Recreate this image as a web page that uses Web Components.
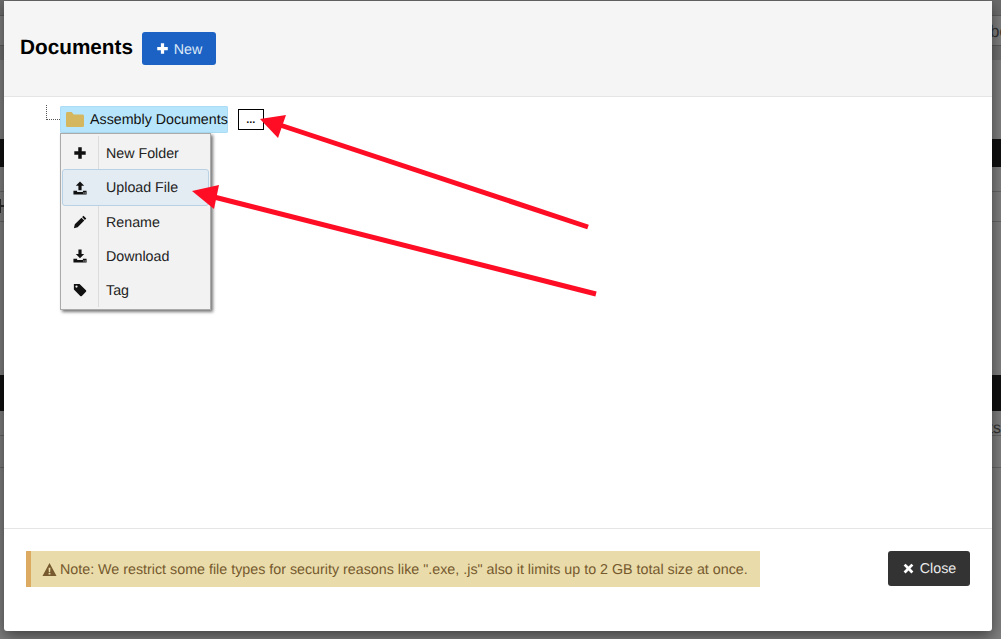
<!DOCTYPE html>
<html>
<head>
<meta charset="utf-8">
<title>Documents</title>
<style>
  html, body { margin: 0; height: 100%; overflow: hidden; }
  body { font-family: "Liberation Sans", Arial, sans-serif; font-size: 14.25px; text-rendering: geometricPrecision; -webkit-font-smoothing: antialiased; }
</style>
</head>
<body>
<page-backdrop></page-backdrop>
<doc-modal>
  <span slot="title">Documents</span>
  <doc-button slot="action" kind="primary" icon="plus">New</doc-button>
  <folder-tree label="Assembly Documents">
    <menu-item icon="plus">New Folder</menu-item>
    <menu-item icon="upload" active>Upload File</menu-item>
    <menu-item icon="pencil">Rename</menu-item>
    <menu-item icon="download">Download</menu-item>
    <menu-item icon="tag">Tag</menu-item>
  </folder-tree>
  <note-alert slot="note">Note: We restrict some file types for security reasons like ".exe, .js" also it limits up to 2 GB total size at once.</note-alert>
  <doc-button slot="close" kind="dark" icon="remove">Close</doc-button>
</doc-modal>
<red-arrows></red-arrows>

<script>
  // glyph shapes, all on a 16x16 box
  const ICONS = {
    plus: '<path d="M6 1.500h4V6h4.500v4H10v4.500H6V10H1.500V6H6z"/>',
    remove: '<path d="M4.400 2 8 5.600 11.600 2 14 4.400 10.400 8l3.600 3.600-2.400 2.400L8 10.400 4.400 14 2 11.600 5.600 8 2 4.400z"/>',
    upload: '<path d="M8 .5l4.800 5H9.800v5.200H6.200V5.500H3.200z"/><path d="M.5 11h4.200v1.500h6.600V11h4.200v4.500H.5z"/><path fill="#f2f2f2" d="M11.900 13.200h1v1h-1zM13.500 13.200h1v1h-1z"/>',
    download: '<path d="M6.200 .5h3.600v5.200h3L8 10.700 3.200 5.700h3z"/><path d="M.5 11h4.200v1.500h6.600V11h4.200v4.500H.5z"/><path fill="#f2f2f2" d="M11.900 13.200h1v1h-1zM13.500 13.200h1v1h-1z"/>',
    pencil: '<path d="M12 .8l3.200 3.200-1.600 1.600-3.200-3.200zM9.700 3.100l3.200 3.200-7.600 7.600-4.300 1.300 1.100-4.500z"/>',
    tag: '<path fill-rule="evenodd" d="M1 1h6.500l7.300 7.300a1.300 1.300 0 0 1 0 1.800l-4.700 4.700a1.300 1.300 0 0 1-1.800 0L1 7.500zM4 2.800a1.300 1.300 0 1 0 0 2.600 1.300 1.300 0 0 0 0-2.600z"/>',
    warning: '<path fill-rule="evenodd" d="M8 1l7.500 14H.5zM7 6l.3 4.800h1.400L9 6zm0 5.800V13.300h2v-1.500z"/>'
  };
  const icon = (name, size) =>
    `<svg width="${size}" height="${size}" viewBox="0 0 16 16" fill="currentColor">${ICONS[name]}</svg>`;

  class PageBackdrop extends HTMLElement {
    constructor() {
      super();
      this.attachShadow({ mode: 'open' });
      this.shadowRoot.innerHTML = `
        <style>
          :host { display: block; height: 639px; background: #7f7f7f; overflow: hidden; color: #333; }
          div { box-sizing: border-box; overflow: hidden; }
          .top { height: 15px; background: #6c6c6c; }
          .nav { height: 31px; border-top: 1px solid #5c5c5c; border-bottom: 1px solid #5c5c5c; text-align: right; font-size: 17px; line-height: 32px; }
          .nav span { margin-right: -8px; }
          .sub { height: 14px; background: #6f6f6f; }
          .black { background: #111; }
          .row { border-bottom: 1px solid #666; }
          .label { text-align: right; font-size: 16px; line-height: 36px; }
          svg { display: block; }
        </style>
        <div class="top"></div>
        <div class="nav"><span>bo</span></div>
        <div class="sub"></div>
        <div style="height:79px"></div>
        <div class="black" style="height:28px"></div>
        <div class="row" style="height:25px"></div>
        <div class="row" style="height:30px"><svg width="4" height="29" fill="#2b2b2b"><path d="M0 7h1v6h3v2H1v6H0z"/></svg></div>
        <div style="height:153px"></div>
        <div class="black" style="height:36px"></div>
        <div class="row label" style="height:25px">ts</div>
        <div class="row" style="height:32px"></div>
      `;
    }
  }

  class DocModal extends HTMLElement {
    constructor() {
      super();
      this.attachShadow({ mode: 'open' });
      this.shadowRoot.innerHTML = `
        <style>
          :host { position: absolute; left: 4px; top: 1px; width: 988px; height: 630px; background: #fff;
            display: flex; flex-direction: column; box-shadow: 0 5px 15px rgba(0,0,0,.5); border-radius: 0 0 3px 3px; }
          header { box-sizing: border-box; height: 96px; background: #f5f5f5; border-bottom: 1px solid #e5e5e5; display: flex; align-items: center;
            gap: 9px; padding: 0 16px; }
          h4 { margin: 0 0 2px; font-size: 20.75px; font-weight: 700; color: #000; }
          main { flex: 1; min-height: 0; padding: 9px 0 0 41px; }
          footer { box-sizing: border-box; height: 103px; border-top: 1px solid #e5e5e5; display: flex; justify-content: space-between;
            align-items: flex-start; padding: 22px 22px 0; }
        </style>
        <header>
          <h4><slot name="title"></slot></h4>
          <slot name="action"></slot>
        </header>
        <main><slot></slot></main>
        <footer>
          <slot name="note"></slot>
          <slot name="close"></slot>
        </footer>
      `;
    }
  }

  class DocButton extends HTMLElement {
    constructor() {
      super();
      this.attachShadow({ mode: 'open' });
      const dark = this.getAttribute('kind') === 'dark';
      this.shadowRoot.innerHTML = `
        <style>
          :host { display: inline-flex; align-items: center; justify-content: center; gap: 5px; box-sizing: border-box;
            border-radius: 3px; color: ${dark ? '#ebebeb' : '#dce8f7'};
            background: ${dark ? '#333' : '#1b62c4'};
            width: ${dark ? 82 : 74}px; height: ${dark ? 35 : 33}px; }
          svg { color: #fff; display: block; }
          .t { padding-top: ${dark ? 0 : 2}px; }
        </style>
        ${icon(this.getAttribute('icon'), 13)}<span class="t"><slot></slot></span>
      `;
    }
  }

  class FolderTree extends HTMLElement {
    constructor() {
      super();
      this.attachShadow({ mode: 'open' });
      this.shadowRoot.innerHTML = `
        <style>
          :host { display: block; position: relative; padding-left: 15px; }
          .elbow { position: absolute; left: 1px; top: -1px; width: 13px; height: 14px;
            border-left: 1px dotted #555; border-bottom: 1px dotted #555; }
          .line { display: flex; align-items: center; gap: 10px; height: 27px; }
          .node { display: flex; align-items: center; gap: 5px; height: 27px; box-sizing: border-box; padding-left: 5px;
            background: #b7e6fc; box-shadow: inset 0 0 0 1px #abdcf4; border-radius: 2px; color: #111; white-space: nowrap; }
          .node span { padding-top: 1px; }
          .more { width: 26px; height: 21px; box-sizing: border-box; border: 1px solid #000; background: #fff; color: #111;
            font-size: 11px; font-weight: 700; text-align: center; line-height: 21px; }
          .menu { width: 151px; height: 177px; box-sizing: border-box; background: #f2f2f2; border: 1px solid #aaa;
            box-shadow: 2px 2px 3px #777; padding: 2px 1px; position: relative; }
          .menu::before { content: ""; position: absolute; left: 37px; top: 2px; bottom: 2px; width: 1px; background: #dcdcdc; }
        </style>
        <div class="elbow"></div>
        <div class="line">
          <div class="node">
            <svg width="20" height="17" viewBox="0 0 20 17"><path fill="#d5b75f" d="M1 2.500C1 1.500 1.700 1 2.500 1h4.200l2 2.500h8.800c.9 0 1.500.6 1.500 1.500v9.500c0 1-.7 1.500-1.500 1.500h-15C1.700 16 1 15.500 1 14.500z"/></svg>
            <span>${this.getAttribute('label')}</span>
          </div>
          <div class="more">...</div>
        </div>
        <div class="menu"><slot></slot></div>
      `;
    }
  }

  class MenuItem extends HTMLElement {
    constructor() {
      super();
      this.attachShadow({ mode: 'open' });
      this.shadowRoot.innerHTML = `
        <style>
          :host { display: flex; align-items: center; position: relative; box-sizing: border-box; height: 34px;
            color: #222; padding: 2px 0 0 44px; }
          :host([active]) { height: 37px; margin: -1px 0 -1px; background: #e4ecf3; border: 1px solid #b9d1e4; border-radius: 3px;
            padding: 1px 0 0 43px; }
          .ico { position: absolute; left: 11px; top: 50%; transform: translateY(-50%); color: #111; width: 14px; height: 14px; }
          :host([active]) .ico { left: 10px; }
          svg { display: block; }
        </style>
        <span class="ico">${icon(this.getAttribute('icon'), 14)}</span>
        <slot></slot>
      `;
    }
  }

  class NoteAlert extends HTMLElement {
    constructor() {
      super();
      this.attachShadow({ mode: 'open' });
      this.shadowRoot.innerHTML = `
        <style>
          :host { display: flex; align-items: center; gap: 3px; box-sizing: border-box; width: 734px; height: 36px;
            background: #e9dcaa; border-left: 5px solid #dcaa61; padding-left: 11px; color: #76592e; font-size: 14.29px; white-space: nowrap; }
          svg { display: block; }
          .t { padding-top: 2px; }
        </style>
        ${icon('warning', 15)}<span class="t"><slot></slot></span>
      `;
    }
  }

  // the annotation arrows lie over the whole page
  class RedArrows extends HTMLElement {
    constructor() {
      super();
      this.attachShadow({ mode: 'open' });
      this.shadowRoot.innerHTML = `
        <style>
          :host { position: absolute; left: 0; top: 0; pointer-events: none; }
          svg { display: block; }
        </style>
        <svg width="1001" height="639" fill="#fe0d25" stroke="none">
          <path d="M588 227 280 125" stroke="#fe0d25" stroke-width="5"/>
          <path d="M260 119 286 115 278 138z"/>
          <path d="M596 294 214 197" stroke="#fe0d25" stroke-width="5"/>
          <path d="M192 191 219 185 214 209z"/>
        </svg>
      `;
    }
  }

  customElements.define('page-backdrop', PageBackdrop);
  customElements.define('doc-modal', DocModal);
  customElements.define('doc-button', DocButton);
  customElements.define('folder-tree', FolderTree);
  customElements.define('menu-item', MenuItem);
  customElements.define('note-alert', NoteAlert);
  customElements.define('red-arrows', RedArrows);
</script>
</body>
</html>
